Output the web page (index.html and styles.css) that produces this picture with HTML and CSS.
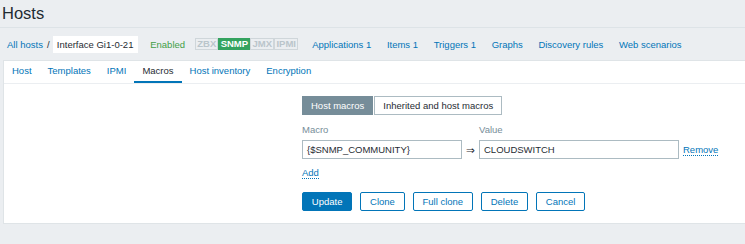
FILE: index.html
```html
<!DOCTYPE html>
<html>
<head>
<meta charset="utf-8">
<link rel="stylesheet" href="styles.css">
</head>
<body>
<header class="page-header"><h1 class="page-title">Hosts</h1></header>
<nav class="host-nav">
  <a class="link crumb" href="#">All hosts</a>
  <span class="crumb-sep">/</span>
  <span class="crumb-current">Interface Gi1-0-21</span>
  <span class="status-enabled">Enabled</span>
  <span class="status-group">
    <span class="badge">ZBX</span><span class="badge badge-on">SNMP</span><span class="badge">JMX</span><span class="badge">IPMI</span>
  </span>
  <span class="nav-links">
    <a class="link" href="#">Applications 1</a>
    <a class="link" href="#">Items 1</a>
    <a class="link" href="#">Triggers 1</a>
    <a class="link" href="#">Graphs</a>
    <a class="link" href="#">Discovery rules</a>
    <a class="link" href="#">Web scenarios</a>
  </span>
</nav>
<main class="panel">
  <ul class="tabs">
    <li class="tab">Host</li>
    <li class="tab">Templates</li>
    <li class="tab">IPMI</li>
    <li class="tab tab-active">Macros</li>
    <li class="tab">Host inventory</li>
    <li class="tab">Encryption</li>
  </ul>
  <div class="form">
    <div class="form-body">
      <div class="segmented">
        <span class="seg seg-active">Host macros</span><span class="seg">Inherited and host macros</span>
      </div>
      <div class="macro-grid">
        <span class="col-label">Macro</span>
        <span></span>
        <span class="col-label">Value</span>
        <span></span>
        <span class="input input-macro">{$SNMP_COMMUNITY}</span>
        <span class="arrow">&rArr;</span>
        <span class="input input-value">CLOUDSWITCH</span>
        <a class="dotted-link remove" href="#">Remove</a>
      </div>
      <div class="add-row"><a class="dotted-link" href="#">Add</a></div>
      <div class="buttons">
        <button class="btn btn-primary">Update</button>
        <button class="btn">Clone</button>
        <button class="btn">Full clone</button>
        <button class="btn">Delete</button>
        <button class="btn">Cancel</button>
      </div>
    </div>
  </div>
</main>
</body>
</html>
```
FILE: styles.css
```css
* { box-sizing: border-box; }
html, body {
  margin: 0;
  padding: 0;
  background: #ebeef1;
  font-family: "Liberation Sans", Arial, sans-serif;
  font-size: 9.5px;
  color: #1f2c33;
  overflow: hidden;
}
a { text-decoration: none; }
.link { color: #0275b8; }

.page-header {
  height: 28px;
  border-bottom: 1px solid #dde3e7;
}
.page-title {
  margin: 0;
  padding-left: 2px;
  font-size: 16.5px;
  font-weight: normal;
  line-height: 27px;
  color: #1f2c33;
}

.host-nav {
  height: 32px;
  display: flex;
  align-items: center;
  padding-left: 7px;
  white-space: nowrap;
}
.crumb-sep {
  color: #1f2c33;
  margin: 0 3px 0 4px;
}
.crumb-current {
  background: #fff;
  padding: 0 4.3px;
  height: 17px;
  line-height: 17px;
  display: inline-flex;
  align-items: center;
}
.status-enabled {
  color: #429e47;
  margin-left: 12.5px;
}
.status-group {
  display: flex;
  margin-left: 10px;
}
.badge {
  font-weight: bold;
  color: #bac5cb;
  border: 1px solid #cfd6da;
  padding: 0 1.2px;
  height: 12px;
  line-height: 10px;
  display: inline-block;
}
.badge-on {
  color: #fff;
  background: #34a35f;
  border-color: #34a35f;
}
.nav-links {
  display: flex;
  gap: 15.6px;
  margin-left: 14px;
}

.panel {
  margin-left: 3px;
  background: #fff;
  border: 1px solid #dfe4e7;
  border-right: none;
  height: 164px;
}
.tabs {
  list-style: none;
  margin: 0;
  padding: 0;
  display: flex;
  height: 23px;
  border-bottom: 1px solid #ebeef1;
}
.tab {
  padding: 0 8px;
  line-height: 20px;
  height: 22px;
  color: #0275b8;
  border-bottom: 2px solid transparent;
}
.tab-active {
  color: #1f2c33;
  border-bottom-color: #0275b8;
}

.form {
  display: grid;
  grid-template-columns: 298px 1fr;
}
.form-body {
  grid-column: 2;
  padding-top: 12px;
}
.segmented {
  display: flex;
  height: 19px;
}
.seg {
  display: inline-flex;
  align-items: center;
  padding: 0 8px;
  border: 1px solid #acbbc2;
  color: #1f2c33;
  background: #fff;
}
.seg-active {
  background: #768d99;
  border-color: #768d99;
  color: #fff;
  margin-right: 1px;
}
.macro-grid {
  display: grid;
  grid-template-columns: 160px 17px 200px auto;
  grid-template-rows: 12px 19px;
  row-gap: 4px;
  margin-top: 9px;
  align-items: center;
}
.col-label {
  color: #768d99;
  line-height: 12px;
}
.input {
  height: 19px;
  border: 1px solid #acbbc2;
  padding: 0 4px;
  display: flex;
  align-items: center;
  color: #1f2c33;
  background: #fff;
}
.arrow {
  text-align: center;
  font-size: 10.5px;
  font-family: "DejaVu Sans", sans-serif;
  line-height: 12px;
  color: #1f2c33;
}
.dotted-link {
  color: #0275b8;
  border-bottom: 1px dotted #0275b8;
  line-height: 11px;
}
.remove {
  justify-self: start;
  margin-left: 4px;
}
.add-row {
  margin-top: 8px;
  height: 12px;
  display: flex;
  align-items: center;
}
.buttons {
  display: flex;
  gap: 8px;
  margin-top: 13px;
}
.btn {
  font-family: inherit;
  font-size: 9.5px;
  height: 19px;
  padding: 0 8.8px;
  border: 1px solid #0275b8;
  border-radius: 2px;
  background: #fff;
  color: #0275b8;
  line-height: 17px;
  margin: 0;
}
.btn-primary {
  background: #0275b8;
  color: #fff;
}
```
